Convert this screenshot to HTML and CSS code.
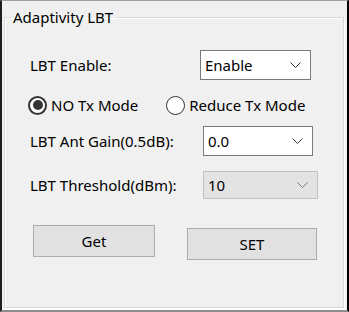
FILE: index.html
```html
<!DOCTYPE html>
<html lang="en">
<head>
    <meta charset="UTF-8" />
    <title>Adaptivity LBT</title>
    <link rel="stylesheet" href="styles.css">
</head>
<body>
    <div class="window">
        <fieldset class="group">
            <legend>Adaptivity LBT</legend>
            <div class="row row-enable">
                <span class="label">LBT Enable:</span>
                <div class="combo combo-enable"><span>Enable</span><svg class="chev" width="11" height="6" viewBox="0 0 11 6"><path d="M0.5 0.5 L5.5 5.5 L10.5 0.5" fill="none" stroke="#333" stroke-width="1"/></svg></div>
            </div>
            <div class="row row-radio">
                <label class="radio radio-no"><span class="dot checked"></span>NO Tx Mode</label>
                <label class="radio radio-reduce"><span class="dot"></span>Reduce Tx Mode</label>
            </div>
            <div class="row row-gain">
                <span class="label">LBT Ant Gain(0.5dB):</span>
                <div class="combo combo-gain"><span>0.0</span><svg class="chev" width="11" height="6" viewBox="0 0 11 6"><path d="M0.5 0.5 L5.5 5.5 L10.5 0.5" fill="none" stroke="#333" stroke-width="1"/></svg></div>
            </div>
            <div class="row row-thr">
                <span class="label">LBT Threshold(dBm):</span>
                <div class="combo combo-thr disabled"><span>10</span><svg class="chev" width="11" height="6" viewBox="0 0 11 6"><path d="M0.5 0.5 L5.5 5.5 L10.5 0.5" fill="none" stroke="#777" stroke-width="1"/></svg></div>
            </div>
            <div class="row row-btn">
                <button class="btn btn-get">Get</button>
                <button class="btn btn-set">SET</button>
            </div>
        </fieldset>
    </div>
</body>
</html>
```
FILE: styles.css
```css
html, body { margin: 0; padding: 0; background: #f0f0f0; }
body { font-family: "Noto Sans", "Open Sans", sans-serif; font-size: 15px; color: #000; }
.window { width: 349px; height: 312px; box-sizing: border-box; background: #f0f0f0;
    border-left: 2px solid #1e1e1e; border-right: 2px solid #000; border-top: 1px solid #a0a0a0; border-bottom: 2px solid #8c8c8c;
    box-shadow: inset 0 -1px 0 #fff; padding: 7px 3px 0 2px; }
.group { margin: 0; padding: 0; height: 300px; box-sizing: border-box; border: 1px solid #d9d9d9;
    box-shadow: 1px 1px 0 #fff, inset 1px 1px 0 #fff; }
.group legend { margin-left: 6px; padding: 0 2px; line-height: 19px; }
.row { display: flex; align-items: center; }
.label { width: 170px; padding-left: 25px; box-sizing: border-box; white-space: nowrap; }
.row-enable { margin-top: 23px; height: 30px; }
.row-radio { margin-top: 15px; height: 20px; }
.row-gain { margin-top: 11px; height: 30px; }
.row-thr { margin-top: 15px; height: 28px; }
.row-btn { margin-top: 26px; align-items: flex-start; }
.combo { box-sizing: border-box; height: 30px; display: flex; align-items: center; justify-content: space-between;
    background: #fff; border: 1px solid #7a7a7a; padding: 0 9px 0 4px; }
.combo-enable { margin-left: 25px; width: 111px; }
.combo-gain { margin-left: 28px; width: 110px; }
.combo-thr { margin-left: 28px; width: 115px; height: 28px; }
.combo.disabled { background: #e3e3e3; border-color: #c2c2c2; }
.chev { display: block; }
.radio { display: flex; align-items: center; white-space: nowrap; }
.radio-no { margin-left: 23px; }
.radio-reduce { margin-left: 28px; }
.dot { width: 19px; height: 19px; box-sizing: border-box; border: 1px solid #333; border-radius: 50%; background: #fff; margin-right: 4px; position: relative; }
.dot.checked { border: 2px solid #333; }
.dot.checked::after { content: ""; position: absolute; left: 2.5px; top: 2.5px; width: 10px; height: 10px; border-radius: 50%; background: #333; }
.btn { font: inherit; color: #000; background: #e1e1e1; border: 1px solid #adadad; height: 32px; padding: 0; box-sizing: border-box; }
.btn-get { margin-left: 28px; width: 122px; margin-top: 0; }
.btn-set { margin-left: 32px; width: 130px; margin-top: 3px; }
```
